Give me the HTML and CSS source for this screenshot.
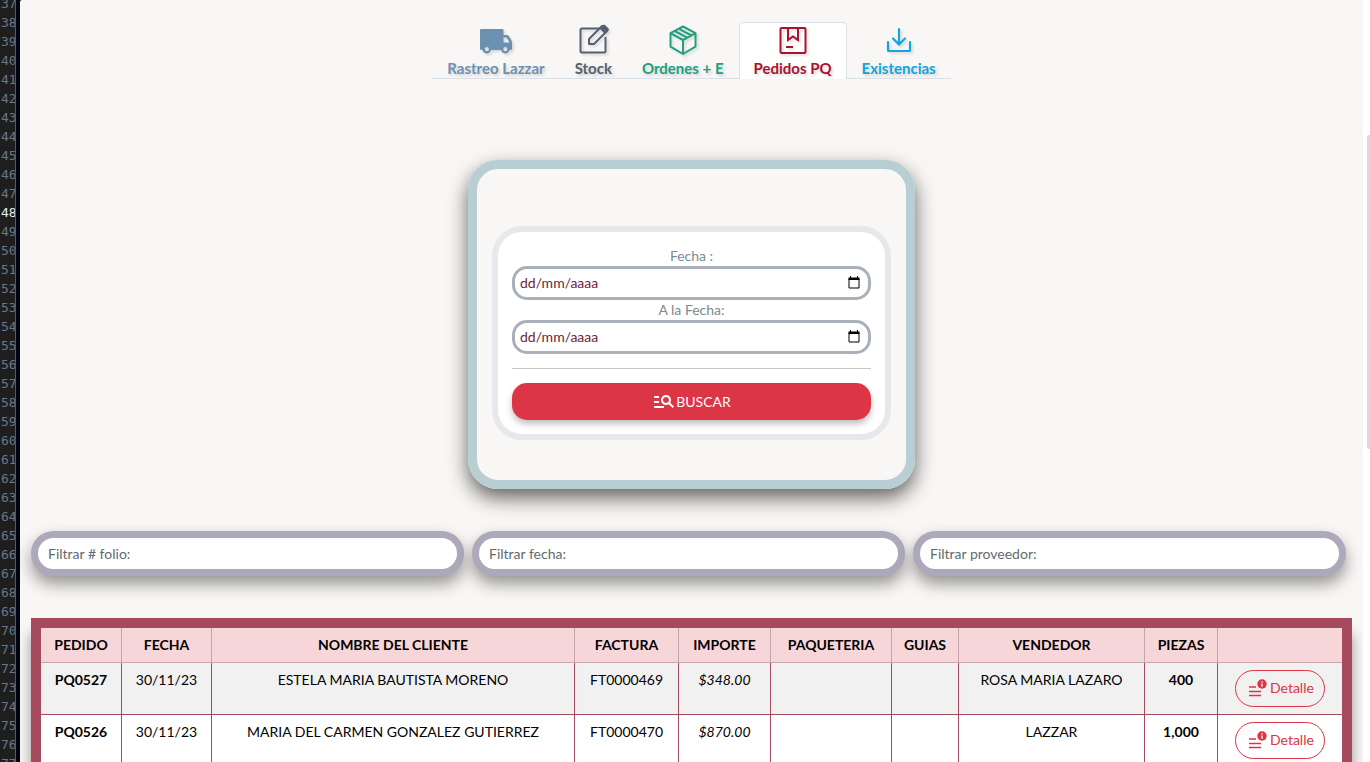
FILE: index.html
```html
<!DOCTYPE html>
<html lang="es">
<head>
<meta charset="utf-8">
<title>Pedidos PQ</title>
<link rel="stylesheet" href="styles.css">
</head>
<body>
<svg class="sprite" aria-hidden="true">
  <symbol id="calendar" viewBox="0 0 12 13"><path d="M1 3h10v9H1z" fill="none" stroke="currentColor"/><path d="M.5 1.500h11V4H.5zM2 0h1v2H2zM9 0h1v2H9z" fill="currentColor"/></symbol>
  <symbol id="detail" viewBox="0 0 18 18"><path d="M0 8h7M0 12.500h12M0 16.500h12" stroke="currentColor" stroke-width="1.500"/><circle cx="13" cy="5" r="4.700" fill="currentColor"/><path d="M13 4.500v3.200M13 2.200v1.300" stroke="#fff" stroke-width="1.300"/></symbol>
</svg>
<div class="screen">
  <aside class="gutter">
    <ol class="lines">
      <li>37</li><li>38</li><li>39</li><li>40</li><li>41</li><li>42</li><li>43</li><li>44</li><li>45</li><li>46</li><li>47</li><li class="current">48</li><li>49</li><li>50</li><li>51</li><li>52</li><li>53</li><li>54</li><li>55</li><li>56</li><li>57</li><li>58</li><li>59</li><li>60</li><li>61</li><li>62</li><li>63</li><li>64</li><li>65</li><li>66</li><li>67</li><li>68</li><li>69</li><li>70</li><li>71</li><li>72</li><li>73</li><li>74</li><li>75</li><li>76</li><li>77</li>
    </ol>
  </aside>
  <main class="page">
    <nav class="tabs">
      <a class="tab tab-track" href="#rastreo">
        <svg class="tab-icon" viewBox="0 0 36 36"><path fill="currentColor" fill-rule="evenodd" d="M3 7h21.500q1 0 1 1v5H29q1.300 0 2 1.200l2.600 4.600q.4.700.4 1.500v6.200q0 1.500-1.500 1.500h-1a4.300 4.300 0 0 1-8.400 0H13a4.300 4.300 0 0 1-8.400 0H3.500Q2 28 2 26.500V8q0-1 1-1zM25.500 15.500v5h6l-2.600-4.500q-.3-.5-.9-.5zM8.800 25a2.100 2.100 0 1 0 0 4.200 2.100 2.100 0 0 0 0-4.200zm18.500 0a2.100 2.100 0 1 0 0 4.200 2.100 2.100 0 0 0 0-4.200z"/></svg>
        <span>Rastreo Lazzar</span>
      </a>
      <a class="tab tab-stock" href="#stock">
        <svg class="tab-icon" viewBox="0 0 36 36"><path d="M24 6.500H7q-1.500 0-1.500 1.500v21q0 1.500 1.500 1.500h22q1.500 0 1.500-1.500V15" fill="none" stroke="currentColor" stroke-width="2"/><path d="M14 22v-5L27 4l5 5-13 13z" fill="none" stroke="currentColor" stroke-width="2" stroke-linejoin="round"/><path d="m24.500 6.500 3.500-3.500q1-1 2 0l3.500 3.500q1 1 0 2L30 12z" fill="currentColor"/></svg>
        <span>Stock</span>
      </a>
      <a class="tab tab-orders" href="#ordenes">
        <svg class="tab-icon" viewBox="0 0 36 36"><path d="m18 4.500 12.500 6.700v13.500L18 32 5.500 24.700V11.200zM5.500 11.200 18 18l12.500-6.800M18 18v14M14 6.800l12.500 6.700M9.700 9l12.500 6.700" fill="none" stroke="currentColor" stroke-width="2" stroke-linejoin="round"/></svg>
        <span>Ordenes + E</span>
      </a>
      <a class="tab tab-pq active" href="#pedidos" aria-current="page">
        <svg class="tab-icon" viewBox="0 0 36 36"><rect x="5.500" y="6" width="25" height="25" rx="1" fill="none" stroke="currentColor" stroke-width="2"/><path d="M13 6v12l5-3.500 5 3.500V6M11 25h7" fill="none" stroke="currentColor" stroke-width="2"/></svg>
        <span>Pedidos PQ</span>
      </a>
      <a class="tab tab-exist" href="#existencias">
        <svg class="tab-icon" viewBox="0 0 36 36"><path d="M18 7v15M12 16.500l6 6 6-6M7 20v8.500q0 .5.500.5h21q.5 0 .5-.5V20" fill="none" stroke="currentColor" stroke-width="2.200" stroke-linecap="round"/></svg>
        <span>Existencias</span>
      </a>
    </nav>

    <section class="search-card">
      <form class="search-form">
        <label for="from">Fecha :</label>
        <div class="date-box">
          <input id="from" type="text" placeholder="dd/mm/aaaa">
          <button type="button" class="date-button" aria-label="Abrir calendario"><svg><use href="#calendar"/></svg></button>
        </div>
        <label for="to">A la Fecha:</label>
        <div class="date-box">
          <input id="to" type="text" placeholder="dd/mm/aaaa">
          <button type="button" class="date-button" aria-label="Abrir calendario"><svg><use href="#calendar"/></svg></button>
        </div>
        <hr>
        <button type="button" class="search-button"><svg viewBox="0 0 24 24"><path fill="currentColor" d="M7 9H2V7h5v2zm0 3H2v2h5v-2zm13.590 7-3.830-3.830c-.8.520-1.740.83-2.760.83-2.760 0-5-2.240-5-5s2.240-5 5-5 5 2.240 5 5c0 1.020-.31 1.960-.83 2.750L22 17.590 20.590 19zM17 11c0-1.650-1.350-3-3-3s-3 1.350-3 3 1.350 3 3 3 3-1.350 3-3zM2 19h10v-2H2v2z"/></svg>BUSCAR</button>
      </form>
    </section>

    <div class="filters">
      <input type="text" aria-label="Filtrar folio" placeholder="Filtrar # folio:">
      <input type="text" aria-label="Filtrar fecha" placeholder="Filtrar fecha:">
      <input type="text" aria-label="Filtrar proveedor" placeholder="Filtrar proveedor:">
    </div>

    <div class="table-frame">
      <table>
        <colgroup><col class="c-order"><col class="c-date"><col><col class="c-invoice"><col class="c-amount"><col class="c-parcel"><col class="c-guide"><col class="c-seller"><col class="c-pieces"><col class="c-action"></colgroup>
        <thead>
          <tr><th>PEDIDO</th><th>FECHA</th><th>NOMBRE DEL CLIENTE</th><th>FACTURA</th><th>IMPORTE</th><th>PAQUETERIA</th><th>GUIAS</th><th>VENDEDOR</th><th>PIEZAS</th><th></th></tr>
        </thead>
        <tbody>
          <tr><td><b>PQ0527</b></td><td>30/11/23</td><td>ESTELA MARIA BAUTISTA MORENO</td><td>FT0000469</td><td><i>$348.00</i></td><td></td><td></td><td>ROSA MARIA LAZARO</td><td><b>400</b></td><td><button type="button" class="detail-button"><svg><use href="#detail"/></svg>Detalle</button></td></tr>
          <tr><td><b>PQ0526</b></td><td>30/11/23</td><td>MARIA DEL CARMEN GONZALEZ GUTIERREZ</td><td>FT0000470</td><td><i>$870.00</i></td><td></td><td></td><td>LAZZAR</td><td><b>1,000</b></td><td><button type="button" class="detail-button"><svg><use href="#detail"/></svg>Detalle</button></td></tr>
        </tbody>
      </table>
    </div>
  </main>
  <div class="scroll-track"><div class="scroll-thumb"></div></div>
</div>
</body>
</html>
```
FILE: styles.css
```css
* { box-sizing: border-box; }
body {
  margin: 0;
  font: 14px/20px Lato, "Noto Sans", sans-serif;
  color: #000;
  background: #000514;
}
input, button { font: inherit; }
.sprite { display: none; }
.screen {
  display: flex;
  height: 100vh;
  overflow: hidden;
}

.gutter {
  flex: 0 0 16px;
  margin-right: 4px;
  overflow: hidden;
  background: #1e1e1e;
  border-right: 1px solid #5a5a5a;
}
.lines {
  margin: -6px 0 0;
  padding: 0 0 0 1px;
  list-style: none;
  font: 13px/19px "DejaVu Sans Mono", monospace;
  color: #6b7689;
}
.lines .current { color: #e6edf3; }

.page {
  flex: 1;
  min-width: 0;
  padding: 22px 11px 0;
  background: #f8f7f5;
  border-top-left-radius: 2px;
}
.scroll-track {
  flex: 0 0 7px;
  padding: 135px 0 0 4px;
  background: #fff;
}
.scroll-thumb {
  height: 314px;
  background: #d3dbe3;
  border-radius: 2px 0 0 2px;
}

.tabs {
  display: flex;
  width: fit-content;
  margin: 0 auto;
  box-shadow: inset 0 -1px #dbe0e8;
}
.tab {
  display: flex;
  flex-direction: column;
  align-items: center;
  padding: 0 14px 1px;
  border: 1px solid transparent;
  border-bottom: 0;
  font-size: 15px;
  font-weight: 700;
  text-decoration: none;
  text-shadow: 2px 2px 3px rgba(0, 0, 0, .15);
}
.tab-icon {
  width: 36px;
  height: 36px;
  margin-top: -1px;
  filter: drop-shadow(2px 2px 1px rgba(0, 0, 0, .12));
}
.tab-track { color: #6c90b0; }
.tab-stock { color: #526070; }
.tab-orders { color: #20a080; }
.tab-pq { color: #a8142c; }
.tab-exist { color: #10a5dc; }
.tab.active {
  background: #fff;
  border-color: #dbe0e8;
  border-radius: 5px 5px 0 0;
}

.search-card {
  width: 447px;
  max-width: 100%;
  margin: 81px auto 0;
  padding: 57px 15px 40px;
  border: 9px solid #b9ced3;
  border-radius: 30px;
  box-shadow: 0 9px 20px rgba(0, 0, 0, .6);
}
.search-form {
  padding: 14px;
  background: #fff;
  border: 6px solid #e7e8ec;
  border-radius: 30px;
}
.search-form label {
  display: block;
  text-align: center;
  color: #7c8a96;
}
.date-box {
  display: flex;
  align-items: center;
  height: 34px;
  padding: 0 8px 1px 5px;
  border: 3px solid #a9b0ba;
  border-radius: 15px;
}
.date-box input {
  flex: 1;
  min-width: 0;
  padding: 0;
  border: 0;
  outline: 0;
  background: none;
}
.date-box input::placeholder { color: #702438; opacity: 1; }
.date-button {
  display: flex;
  padding: 0;
  border: 0;
  background: none;
  color: #000;
}
.date-button svg { width: 12px; height: 13px; }
.search-form hr {
  margin: 14px 0;
  border: 0;
  border-top: 1px solid #c5c5c5;
}
.search-button {
  display: flex;
  align-items: center;
  justify-content: center;
  width: 100%;
  height: 37px;
  padding: 0;
  border: 0;
  border-radius: 15px;
  background: #dc3545;
  color: #fff;
  box-shadow: 0 4px 6px rgba(0, 0, 0, .25);
}
.search-button svg { width: 24px; height: 24px; margin-bottom: 1px; }

.filters {
  display: grid;
  grid-template-columns: repeat(3, 1fr);
  gap: 8px;
  margin: 42px 6px 42px 0;
}
.filters input {
  min-width: 0;
  height: 45px;
  padding: 0 10px;
  border: 7px solid #aea9ba;
  border-radius: 23px;
  background: #fff;
  box-shadow: 0 8px 16px rgba(0, 0, 0, .4);
}
.filters input::placeholder { color: #626a70; opacity: 1; }

.table-frame {
  border: 10px solid #a54b5d;
  box-shadow: 0 16px 12px rgba(0, 0, 0, .4);
}
table {
  width: 100%;
  table-layout: fixed;
  border-collapse: separate;
  border-spacing: 0;
  text-align: center;
}
.c-order { width: 81px; }
.c-date { width: 90px; }
.c-invoice { width: 104px; }
.c-amount { width: 92px; }
.c-parcel { width: 121px; }
.c-guide { width: 67px; }
.c-seller { width: 186px; }
.c-pieces { width: 73px; }
.c-action { width: 124px; }
th, td {
  padding: 7px 0;
  border: 0 solid #a54b5d;
  border-width: 0 1px 1px 0;
  vertical-align: top;
}
th {
  background: #f6d6d9;
  border-color: #c7a6aa;
}
th:last-child, td:last-child { border-right: 0; }
td { background: #fff; }
tbody tr:nth-child(odd) td { background: #f1f1f1; }
.detail-button {
  display: flex;
  align-items: center;
  gap: 3px;
  width: 90px;
  height: 37px;
  margin: 0 auto;
  padding: 0 0 1px 13px;
  border: 1px solid #dc3545;
  border-radius: 19px;
  background: none;
  color: #dc3545;
}
.detail-button svg { width: 18px; height: 18px; }
```
